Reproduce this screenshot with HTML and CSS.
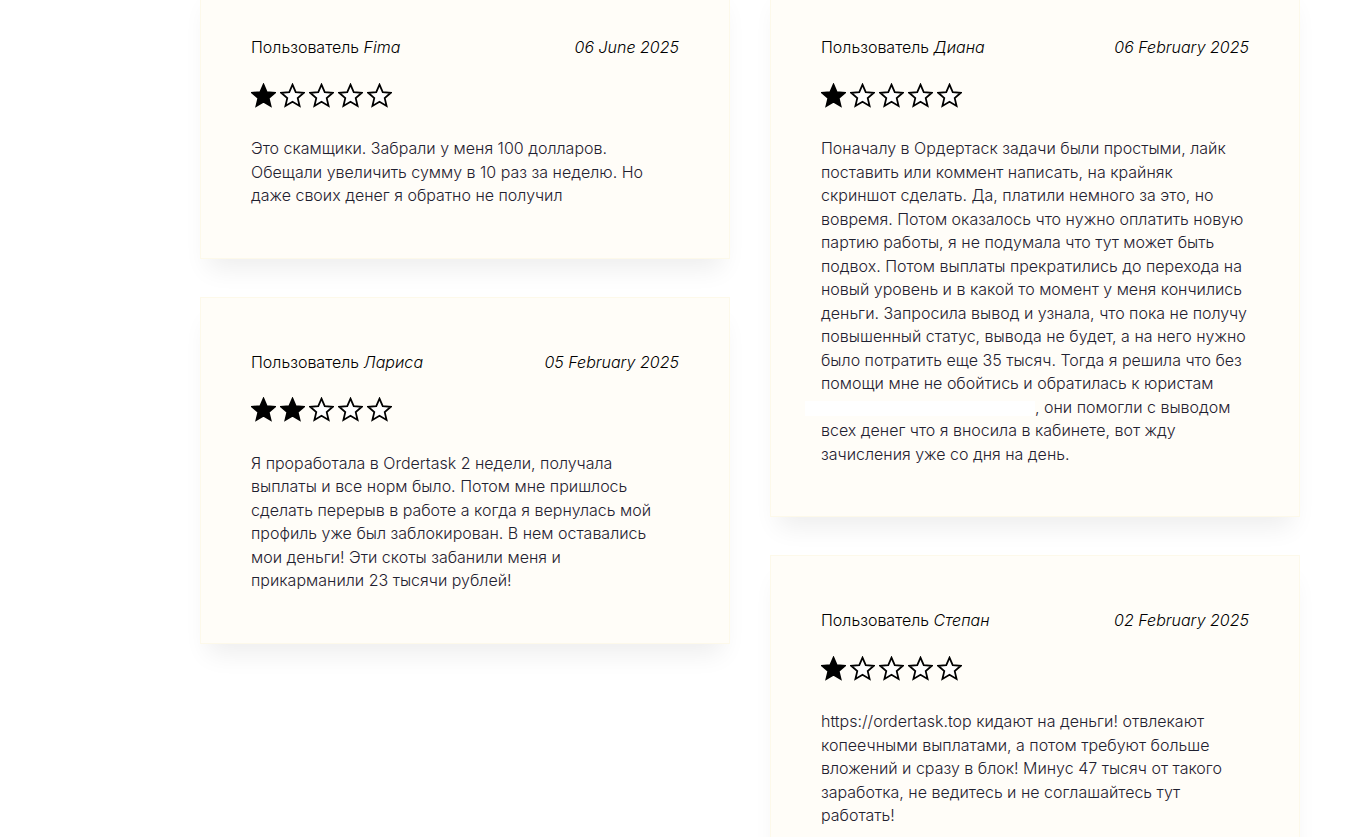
FILE: index.html
```html
<!DOCTYPE html>
<html lang="ru">
<head>
<meta charset="utf-8">
<title>Отзывы</title>
<link rel="stylesheet" href="styles.css">
</head>
<body>
<svg width="0" height="0" class="defs" aria-hidden="true">
  <defs>
    <path id="star" d="M12 1.6l3.1 7.2 7.8.6-5.9 5.1 1.8 7.6L12 18l-6.8 4.1 1.8-7.6-5.9-5.1 7.8-.6z"/>
  </defs>
</svg>
<main class="reviews">
  <div class="col">
    <article class="card">
      <div class="head"><span class="user">Пользователь <i>Fima</i></span><span class="date">06 June 2025</span></div>
      <div class="stars">
        <svg class="s on" viewBox="0 0 24 24"><use href="#star"/></svg><svg class="s" viewBox="0 0 24 24"><use href="#star"/></svg><svg class="s" viewBox="0 0 24 24"><use href="#star"/></svg><svg class="s" viewBox="0 0 24 24"><use href="#star"/></svg><svg class="s" viewBox="0 0 24 24"><use href="#star"/></svg>
      </div>
      <p class="text">Это скамщики. Забрали у меня 100 долларов. Обещали увеличить сумму в 10 раз за неделю. Но даже своих денег я обратно не получил</p>
    </article>
    <article class="card">
      <div class="head"><span class="user">Пользователь <i>Лариса</i></span><span class="date">05 February 2025</span></div>
      <div class="stars">
        <svg class="s on" viewBox="0 0 24 24"><use href="#star"/></svg><svg class="s on" viewBox="0 0 24 24"><use href="#star"/></svg><svg class="s" viewBox="0 0 24 24"><use href="#star"/></svg><svg class="s" viewBox="0 0 24 24"><use href="#star"/></svg><svg class="s" viewBox="0 0 24 24"><use href="#star"/></svg>
      </div>
      <p class="text">Я проработала в Ordertask 2 недели, получала выплаты и все норм было. Потом мне пришлось сделать перерыв в работе а когда я вернулась мой профиль уже был заблокирован. В нем оставались мои деньги! Эти скоты забанили меня и прикарманили 23 тысячи рублей!</p>
    </article>
  </div>
  <div class="col">
    <article class="card">
      <div class="head"><span class="user">Пользователь <i>Диана</i></span><span class="date">06 February 2025</span></div>
      <div class="stars">
        <svg class="s on" viewBox="0 0 24 24"><use href="#star"/></svg><svg class="s" viewBox="0 0 24 24"><use href="#star"/></svg><svg class="s" viewBox="0 0 24 24"><use href="#star"/></svg><svg class="s" viewBox="0 0 24 24"><use href="#star"/></svg><svg class="s" viewBox="0 0 24 24"><use href="#star"/></svg>
      </div>
      <p class="text">Поначалу в Ордертаск задачи были простыми, лайк поставить или коммент написать, на крайняк скриншот сделать. Да, платили немного за это, но вовремя. Потом оказалось что нужно оплатить новую партию работы, я не подумала что тут может быть подвох. Потом выплаты прекратились до перехода на новый уровень и в какой то момент у меня кончились деньги. Запросила вывод и узнала, что пока не получу повышенный статус, вывода не будет, а на него нужно было потратить еще 35 тысяч. Тогда я решила что без помощи мне не обойтись и обратилась к юристам <span class="redact"></span>, они помогли с выводом всех денег что я вносила в кабинете, вот жду зачисления уже со дня на день.</p>
    </article>
    <article class="card">
      <div class="head"><span class="user">Пользователь <i>Степан</i></span><span class="date">02 February 2025</span></div>
      <div class="stars">
        <svg class="s on" viewBox="0 0 24 24"><use href="#star"/></svg><svg class="s" viewBox="0 0 24 24"><use href="#star"/></svg><svg class="s" viewBox="0 0 24 24"><use href="#star"/></svg><svg class="s" viewBox="0 0 24 24"><use href="#star"/></svg><svg class="s" viewBox="0 0 24 24"><use href="#star"/></svg>
      </div>
      <p class="text">https://ordertask.top кидают на деньги! отвлекают копеечными выплатами, а потом требуют больше вложений и сразу в блок! Минус 47 тысяч от такого заработка, не ведитесь и не соглашайтесь тут работать!</p>
    </article>
  </div>
</main>
</body>
</html>
```

FILE: styles.css
```css
html, body {
  margin: 0;
  padding: 0;
  background: #ffffff;
  overflow: hidden;
}
body {
  font-family: Inter, "Noto Sans", sans-serif;
  color: #222;
}
.defs {
  position: absolute;
  width: 0;
  height: 0;
}
.reviews {
  display: flex;
  gap: 40px;
  padding-left: 200px;
  margin-top: -18px;
  align-items: flex-start;
}
.col {
  width: 530px;
  display: flex;
  flex-direction: column;
  gap: 38px;
}
.card {
  box-sizing: border-box;
  background: #fffdf8;
  border: 1px solid #fdf9ea;
  padding: 50px 51px 50px 50px;
  box-shadow: 0 18px 24px -8px rgba(0, 0, 0, 0.07);
}
.head {
  display: flex;
  justify-content: space-between;
  align-items: center;
  height: 28px;
  font-size: 16px;
  font-weight: 300;
  color: #000;
  margin-right: -1px;
}
.head i, .date {
  font-style: italic;
}
.stars {
  display: flex;
  gap: 4px;
  margin-top: 21px;
  height: 26px;
  align-items: center;
}
.s {
  width: 25px;
  height: 25px;
  fill: #fff;
  stroke: #000;
  stroke-width: 1.7;
  stroke-linejoin: miter;
}
.s.on {
  fill: #000;
}
.text {
  margin: 29px 0 0;
  font-size: 16px;
  font-weight: 300;
  line-height: 23.5px;
  color: #1f2130;
}
.redact {
  display: inline-block;
  width: 214px;
  height: 15px;
  vertical-align: -3px;
  background: #ffffff;
  box-shadow: -16px 0 0 #ffffff;
}
```
